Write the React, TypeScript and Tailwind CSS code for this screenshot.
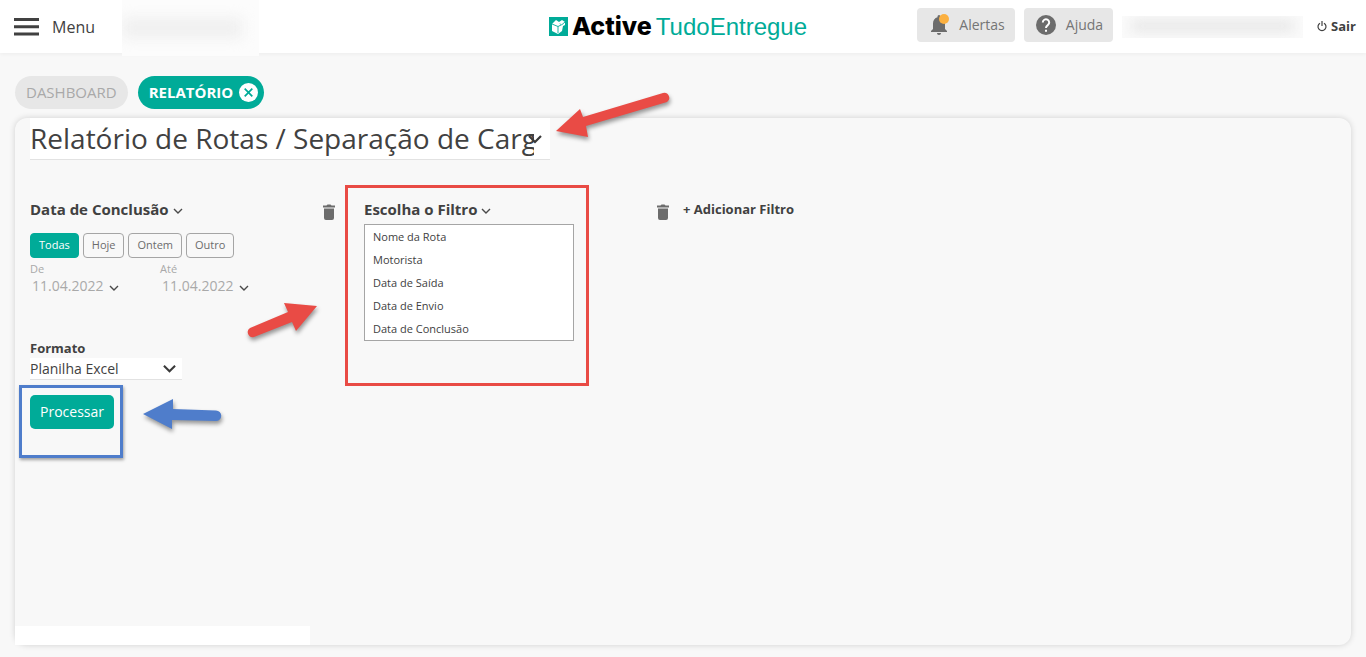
import React, { useState } from 'react';

const filterOptions = ['Nome da Rota', 'Motorista', 'Data de Saída', 'Data de Envio', 'Data de Conclusão'];
const periods = ['Todas', 'Hoje', 'Ontem', 'Outro'];

const App: React.FC = () => {
  const [period, setPeriod] = useState('Todas');

  return (
    <div className="relative flex flex-col min-h-screen bg-[#f8f8f8] text-[#414141] font-['Open_Sans',sans-serif]">
      <Header />

      {/* Tabs */}
      <nav className="flex gap-2.5 px-[15px] pt-[23px] pb-[9px]">
        <button className="h-[33px] px-[11px] rounded-full bg-[#e7e7e7] text-[#a9a9a9] text-[15px]">DASHBOARD</button>
        <button className="flex items-center gap-1.5 h-[33px] pl-[11px] pr-1.5 rounded-full bg-[#00ab98] text-white text-[15px] font-bold">
          RELATÓRIO
          <svg width="19" height="19" viewBox="0 0 19 19">
            <circle cx="9.5" cy="9.5" r="9.5" fill="#fff" />
            <path d="M5.7 5.7l7.6 7.6M13.3 5.7l-7.6 7.6" stroke="#00ab98" strokeWidth="1.7" />
          </svg>
        </button>
      </nav>

      {/* Report panel */}
      <main className="flex flex-col flex-1 mx-[15px] mb-3 rounded-xl shadow-[0_0_6px_rgba(0,0,0,0.16)]">
        <div className="relative self-start ml-[15px] w-[520px] max-w-full">
          <select
            aria-label="Relatório"
            className="block w-full h-[42px] pr-4 pb-0.5 appearance-none bg-white border-b border-[#e2e2e2] text-[28px] leading-[38px]"
          >
            <option>Relatório de Rotas / Separação de Cargas</option>
          </select>
          <Chevron className="absolute right-2 top-3.5 pointer-events-none" size={14} />
        </div>

        {/* Filters */}
        <section className="flex items-start px-[15px] pt-10">
          <div className="flex justify-between w-[306px] mr-7">
            <div>
              <FilterTitle text="Data de Conclusão" />
              <div className="flex gap-1 mt-3">
                {periods.map((item) => (
                  <button
                    key={item}
                    onClick={() => setPeriod(item)}
                    className={
                      item === period
                        ? 'h-[25px] px-2 rounded border border-[#00ab98] bg-[#00ab98] text-white text-[11px]'
                        : 'h-[25px] px-2 rounded border border-[#a5a5a5] text-[#6c6c6c] text-[11px]'
                    }
                  >
                    {item}
                  </button>
                ))}
              </div>
              <div className="flex mt-[3px] text-[#a9a9a9]">
                <DateField label="De" value="11.04.2022" />
                <DateField label="Até" value="11.04.2022" />
              </div>
            </div>
            <TrashButton />
          </div>

          <div className="relative flex justify-between w-[306px] mr-[13px]">
            <div>
              <FilterTitle text="Escolha o Filtro" />
              <ul className="absolute left-0 top-6 w-[210px] border border-[#a5a5a5] bg-white">
                {filterOptions.map((option) => (
                  <li key={option}>
                    <button className="block w-full h-[23px] pt-0.5 px-2 text-left text-[11px]">{option}</button>
                  </li>
                ))}
              </ul>
            </div>
            <TrashButton />
            <div className="absolute -left-[19px] -top-[15px] w-[244px] h-[201px] border-3 border-[#e94b45] pointer-events-none" />
          </div>

          <button className="text-[13px] leading-[18px] font-bold">+ Adicionar Filtro</button>
        </section>

        {/* Output format */}
        <section className="flex flex-col items-start px-[15px] pt-[42px]">
          <label htmlFor="format" className="text-[13px] leading-5 font-bold">Formato</label>
          <div className="relative w-[152px]">
            <select
              id="format"
              className="block w-full h-[22px] appearance-none bg-white border-b border-[#e2e2e2] text-sm"
            >
              <option>Planilha Excel</option>
            </select>
            <Chevron className="absolute right-1.5 top-1 pointer-events-none" size={13} />
          </div>
          <div className="relative mt-[15px]">
            <button className="h-[34px] px-2.5 rounded-[5px] bg-[#00ab98] text-white text-sm">Processar</button>
            <div className="absolute -left-[11px] -top-[10px] w-[104px] h-[73px] border-3 border-[#4f7dcb] shadow-[1px_2px_3px_rgba(0,0,0,0.35)] pointer-events-none" />
          </div>
        </section>

        <div className="mt-auto w-[295px] h-[19px] bg-white" />
      </main>

      <Arrows />
    </div>
  );
};

const Header: React.FC = () => {
  return (
    <header className="grid grid-cols-[1fr_auto_1fr] items-center h-[53px] pr-2.5 bg-white shadow-[0_1px_4px_rgba(0,0,0,0.05)]">
      <div className="flex items-center h-[53px]">
        <button className="flex items-center gap-[13px] w-[122px] pl-3.5 text-base">
          <svg width="25" height="18" viewBox="0 0 25 18" fill="#414141">
            <path d="M0 0h25v3H0zM0 7.2h25v3H0zM0 14.4h25v3H0z" />
          </svg>
          Menu
        </button>
        <div className="self-start w-[137px] h-[56px] pt-[18px] bg-[#fcfcfc] overflow-hidden">
          <div className="w-[120px] h-5 bg-[#efefef] blur-[7px]" />
        </div>
      </div>

      <a href="#" className="flex items-center h-[51px] text-2xl">
        <svg width="19" height="19" viewBox="0 0 19 19" className="mr-1">
          <path d="M0 0h19v19H0z" fill="#00ab98" />
          <path d="M3 7l4-4 3 2 3-2 3 2v3l-2 1-1 5-4 3-6-3z" fill="#fff" />
          <path d="M3 7l6 2.500 3-1.500M9 9.500V16M11 6.500l1.500 1.500L16 5" fill="none" stroke="#00ab98" strokeWidth="0.9" />
        </svg>
        <span className="mr-1 font-extrabold text-black text-[25px] font-['Inter',sans-serif]">Active</span>
        <span className="text-[#00ab98] font-['Liberation_Sans',sans-serif]">TudoEntregue</span>
      </a>

      <div className="flex items-center justify-end h-[50px] whitespace-nowrap">
        <button className="flex items-center gap-2.5 h-[34px] pl-3 pr-2.5 mr-[9px] mb-1 rounded bg-[#e7e7e7] text-[#757575] text-sm">
          <svg width="20" height="22" viewBox="0 0 20 22">
            <path
              d="M10 21c1.2 0 2-.8 2-2H8c0 1.2.8 2 2 2zM16 15V9.500c0-3.200-1.700-5.500-4.500-6.200V2.500a1.500 1.500 0 0 0-3 0v.8C5.700 4 4 6.300 4 9.500V15l-2 2v1h16v-1z"
              fill="#6c6c6c"
            />
            <circle cx="15" cy="5" r="5" fill="#fbb040" />
          </svg>
          Alertas
        </button>
        <button className="flex items-center gap-2.5 h-[34px] pl-3 pr-2.5 mr-[9px] mb-1 rounded bg-[#e7e7e7] text-[#757575] text-sm">
          <svg width="20" height="20" viewBox="0 0 20 20">
            <circle cx="10" cy="10" r="10" fill="#6c6c6c" />
            <path d="M6.8 7.5a3.2 3.2 0 1 1 5 2.6C10.7 10.9 10 11.5 10 13" fill="none" stroke="#fff" strokeWidth="2" />
            <path d="M9 14.8h2v2H9z" fill="#fff" />
          </svg>
          Ajuda
        </button>
        <div className="w-[181px] h-[22px] mr-3.5 overflow-hidden bg-[#fafafa]">
          <div className="mx-2.5 mt-1 h-3 bg-[#e8e8e8] blur-[6px]" />
        </div>
        <button className="flex items-center gap-1 text-[13px] font-bold">
          <svg width="10" height="11" viewBox="0 0 10 11" fill="none" stroke="#414141" strokeWidth="1.2">
            <path d="M3 2.2a4 4 0 1 0 4 0M5 0v5" />
          </svg>
          Sair
        </button>
      </div>
    </header>
  );
};

const Chevron: React.FC<{ size: number; className?: string }> = ({ size, className }) => {
  return (
    <svg width={size} height={size} viewBox="0 0 14 14" className={className} fill="none" stroke="#3a3a3a" strokeWidth="2.2">
      <path d="M1 4l6 6 6-6" />
    </svg>
  );
};

const FilterTitle: React.FC<{ text: string }> = ({ text }) => {
  return (
    <button className="flex items-center gap-1 h-[21px] pb-[3px] text-[15px] leading-[18px] font-bold">
      {text}
      <SmallChevron />
    </button>
  );
};

const SmallChevron: React.FC = () => {
  return (
    <svg width="10" height="6" viewBox="0 0 10 6" className="mt-1" fill="none" stroke="#4a4a4a" strokeWidth="1.4">
      <path d="M1 1l4 4 4-4" />
    </svg>
  );
};

const DateField: React.FC<{ label: string; value: string }> = ({ label, value }) => {
  return (
    <div className="w-[130px]">
      <div className="text-[11px] leading-[15px]">{label}</div>
      <button className="flex items-center gap-1.5 pl-0.5 text-sm leading-5" aria-label={label}>
        {value}
        <SmallChevron />
      </button>
    </div>
  );
};

const TrashButton: React.FC = () => {
  return (
    <button aria-label="Remover filtro" className="self-start mt-1">
      <svg width="14" height="16" viewBox="0 0 14 16" fill="#6c6c6c">
        <path d="M1 1.5h3.5l1-1h3l1 1H13v2H1zM2 4.5h10V14a2 2 0 0 1-2 2H4a2 2 0 0 1-2-2z" />
      </svg>
    </button>
  );
};

// Callout arrows drawn over the screen
const Arrows: React.FC = () => {
  return (
    <svg
      width="680"
      height="440"
      viewBox="0 0 680 440"
      className="absolute left-0 top-0 pointer-events-none drop-shadow-[1px_3px_2px_rgba(0,0,0,0.4)]"
    >
      <path d="M556 131L580 109L583 117L663 93A5 5 0 0 1 667 102L586 126L588 137Z" fill="#e94b45" />
      <path d="M317 306L284 303L288 312L250 328A5 5 0 0 0 254 337L292 322L296 331Z" fill="#e94b45" />
      <path d="M143 414L173 399V409L216 410.5A5 5 0 0 1 216 421L172 420V429Z" fill="#4f7dcb" />
    </svg>
  );
};

export default App;
